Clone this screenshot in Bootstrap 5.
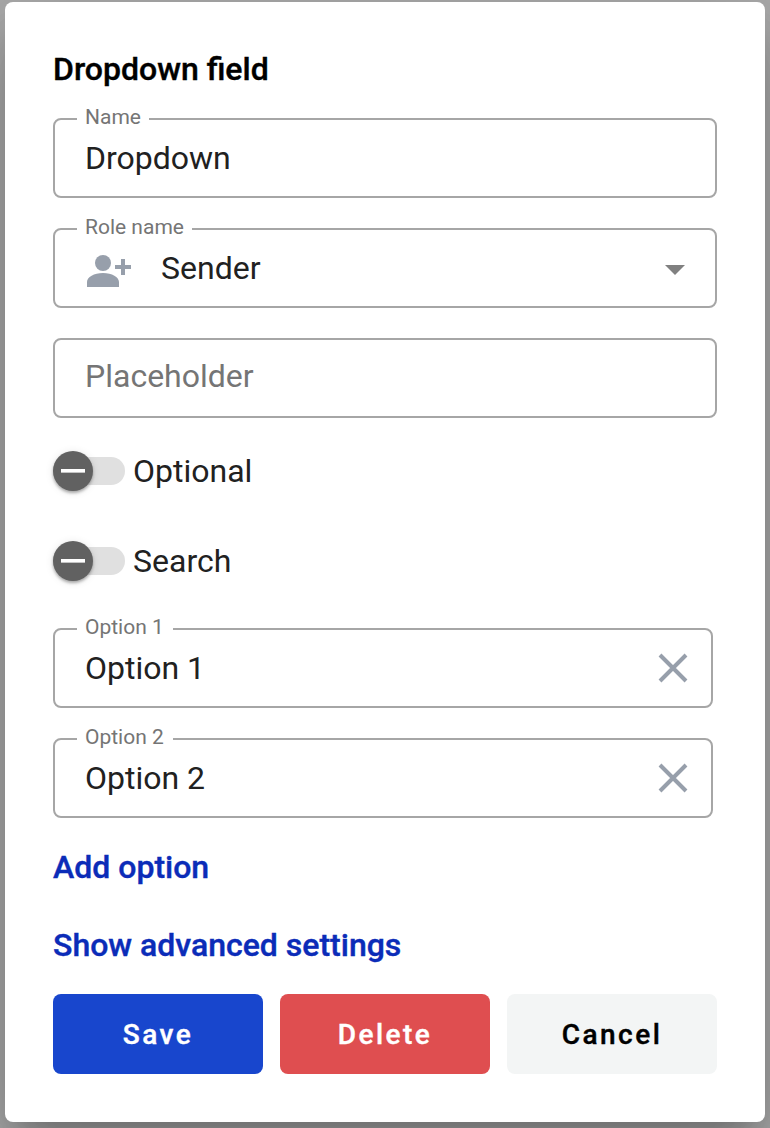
<!DOCTYPE html>
<html lang="en">
<head>
<meta charset="utf-8">
<meta name="viewport" content="width=device-width, initial-scale=1">
<title>Dropdown field</title>
<link href="https://cdn.jsdelivr.net/npm/bootstrap@5.3.0/dist/css/bootstrap.min.css" rel="stylesheet">
<style>
  body { background: #acacac; font-family: Roboto, sans-serif; color: #212121; overflow: hidden; height: 1128px; }
  .dialog { width: 760px; height: 1120px; margin: 2px 5px 0; padding: 48px; border-radius: 8px;
    box-shadow: 0 22px 30px -14px rgba(0,0,0,.2), 0 48px 76px 6px rgba(0,0,0,.14), 0 18px 92px 16px rgba(0,0,0,.12); }
  .dialog-title { font-size: 32px; line-height: 38px; font-weight: 500; color: #000; margin: 0 0 30px; }
  .dialog-title, .action, .footer-btn { -webkit-text-stroke: .4px currentColor; }
  .field { height: 80px; border: 2px solid #a6a6a6; border-radius: 8px; padding: 0 30px; margin-bottom: 30px;
    font-size: 32px; line-height: 40px; }
  .field-short { width: 660px; padding-right: 22px; }
  .field-label { left: 22px; top: -15px; padding: 0 8px; background: #fff; color: #757575; font-size: 21px; line-height: 24px; }
  .field-short .field-label { padding-right: 9px; }
  .person { margin: 4px 28px 0 0; }
  .caret { margin-top: 3px; }
  .ghost { color: #757575; padding-bottom: 4px; }
  .toggle-row { height: 40px; font-size: 32px; line-height: 40px; gap: 8px; }
  .toggle-first { margin: 33px 0 50px; }
  .toggle-second { margin-bottom: 47px; }
  .track { width: 72px; height: 28px; border-radius: 14px; background: #e0e0e0; }
  .knob { width: 40px; height: 40px; border-radius: 50%; background: #616161; box-shadow: 0 2px 3px rgba(0,0,0,.3), 0 1px 8px rgba(0,0,0,.1); }
  .knob::after { content: ""; width: 24px; height: 4px; background: linear-gradient(#fff 3px, #c4c4c4 3px); }
  .links { gap: 38px; margin: -1px 0 29px; }
  .action { font-size: 32px; line-height: 40px; font-weight: 500; color: #0b2cb8; }
  .buttons { gap: 17px; }
  .footer-btn { flex: 1 1 0; height: 80px; border: 0; border-radius: 8px; font-size: 28px; font-weight: 500; letter-spacing: 2.5px; padding-top: 7px; }
  .save, .save:hover { background: #1846cd; color: #fff; }
  .delete, .delete:hover { background: #df4e50; color: #fff; }
  .cancel, .cancel:hover { background: #f3f5f5; color: #000; }
</style>
</head>
<body>
<main class="dialog bg-white">
  <h1 class="dialog-title">Dropdown field</h1>

  <div class="field position-relative d-flex align-items-center">
    <span class="field-label position-absolute">Name</span>
    <span>Dropdown</span>
  </div>
  <div class="field position-relative d-flex align-items-center">
    <span class="field-label position-absolute">Role name</span>
    <svg class="person" width="48" height="36" viewBox="0 0 48 36" fill="#979fab">
      <circle cx="18" cy="11" r="8"/>
      <path d="M2 35v-5c0-5 7-9 16-9s16 4 16 9v5zM36 7h4v6h6v4h-6v6h-4v-6h-6v-4h6z"/>
    </svg>
    <span>Sender</span>
    <svg class="caret ms-auto" width="20" height="10" viewBox="0 0 20 10" fill="#808080"><path d="M0 0h20L10 10z"/></svg>
  </div>
  <div class="field d-flex align-items-center">
    <span class="ghost">Placeholder</span>
  </div>

  <div class="toggle-row toggle-first d-flex align-items-center">
    <div class="track d-flex align-items-center"><div class="knob d-flex flex-shrink-0 align-items-center justify-content-center"></div></div>
    <span>Optional</span>
  </div>
  <div class="toggle-row toggle-second d-flex align-items-center">
    <div class="track d-flex align-items-center"><div class="knob d-flex flex-shrink-0 align-items-center justify-content-center"></div></div>
    <span>Search</span>
  </div>

  <div class="field field-short position-relative d-flex align-items-center">
    <span class="field-label position-absolute">Option 1</span>
    <span>Option 1</span>
    <svg class="ms-auto" width="32" height="32" viewBox="0 0 32 32" fill="none" stroke="#979fab" stroke-width="4"><path d="M3 3l26 26M29 3L3 29"/></svg>
  </div>
  <div class="field field-short position-relative d-flex align-items-center">
    <span class="field-label position-absolute">Option 2</span>
    <span>Option 2</span>
    <svg class="ms-auto" width="32" height="32" viewBox="0 0 32 32" fill="none" stroke="#979fab" stroke-width="4"><path d="M3 3l26 26M29 3L3 29"/></svg>
  </div>

  <div class="links d-flex flex-column align-items-start">
    <a class="action text-decoration-none" href="#">Add option</a>
    <a class="action text-decoration-none" href="#">Show advanced settings</a>
  </div>

  <div class="buttons d-flex">
    <button class="btn footer-btn save" type="button">Save</button>
    <button class="btn footer-btn delete" type="button">Delete</button>
    <button class="btn footer-btn cancel" type="button">Cancel</button>
  </div>
</main>
<script src="https://cdn.jsdelivr.net/npm/bootstrap@5.3.0/dist/js/bootstrap.bundle.min.js"></script>
</body>
</html>
